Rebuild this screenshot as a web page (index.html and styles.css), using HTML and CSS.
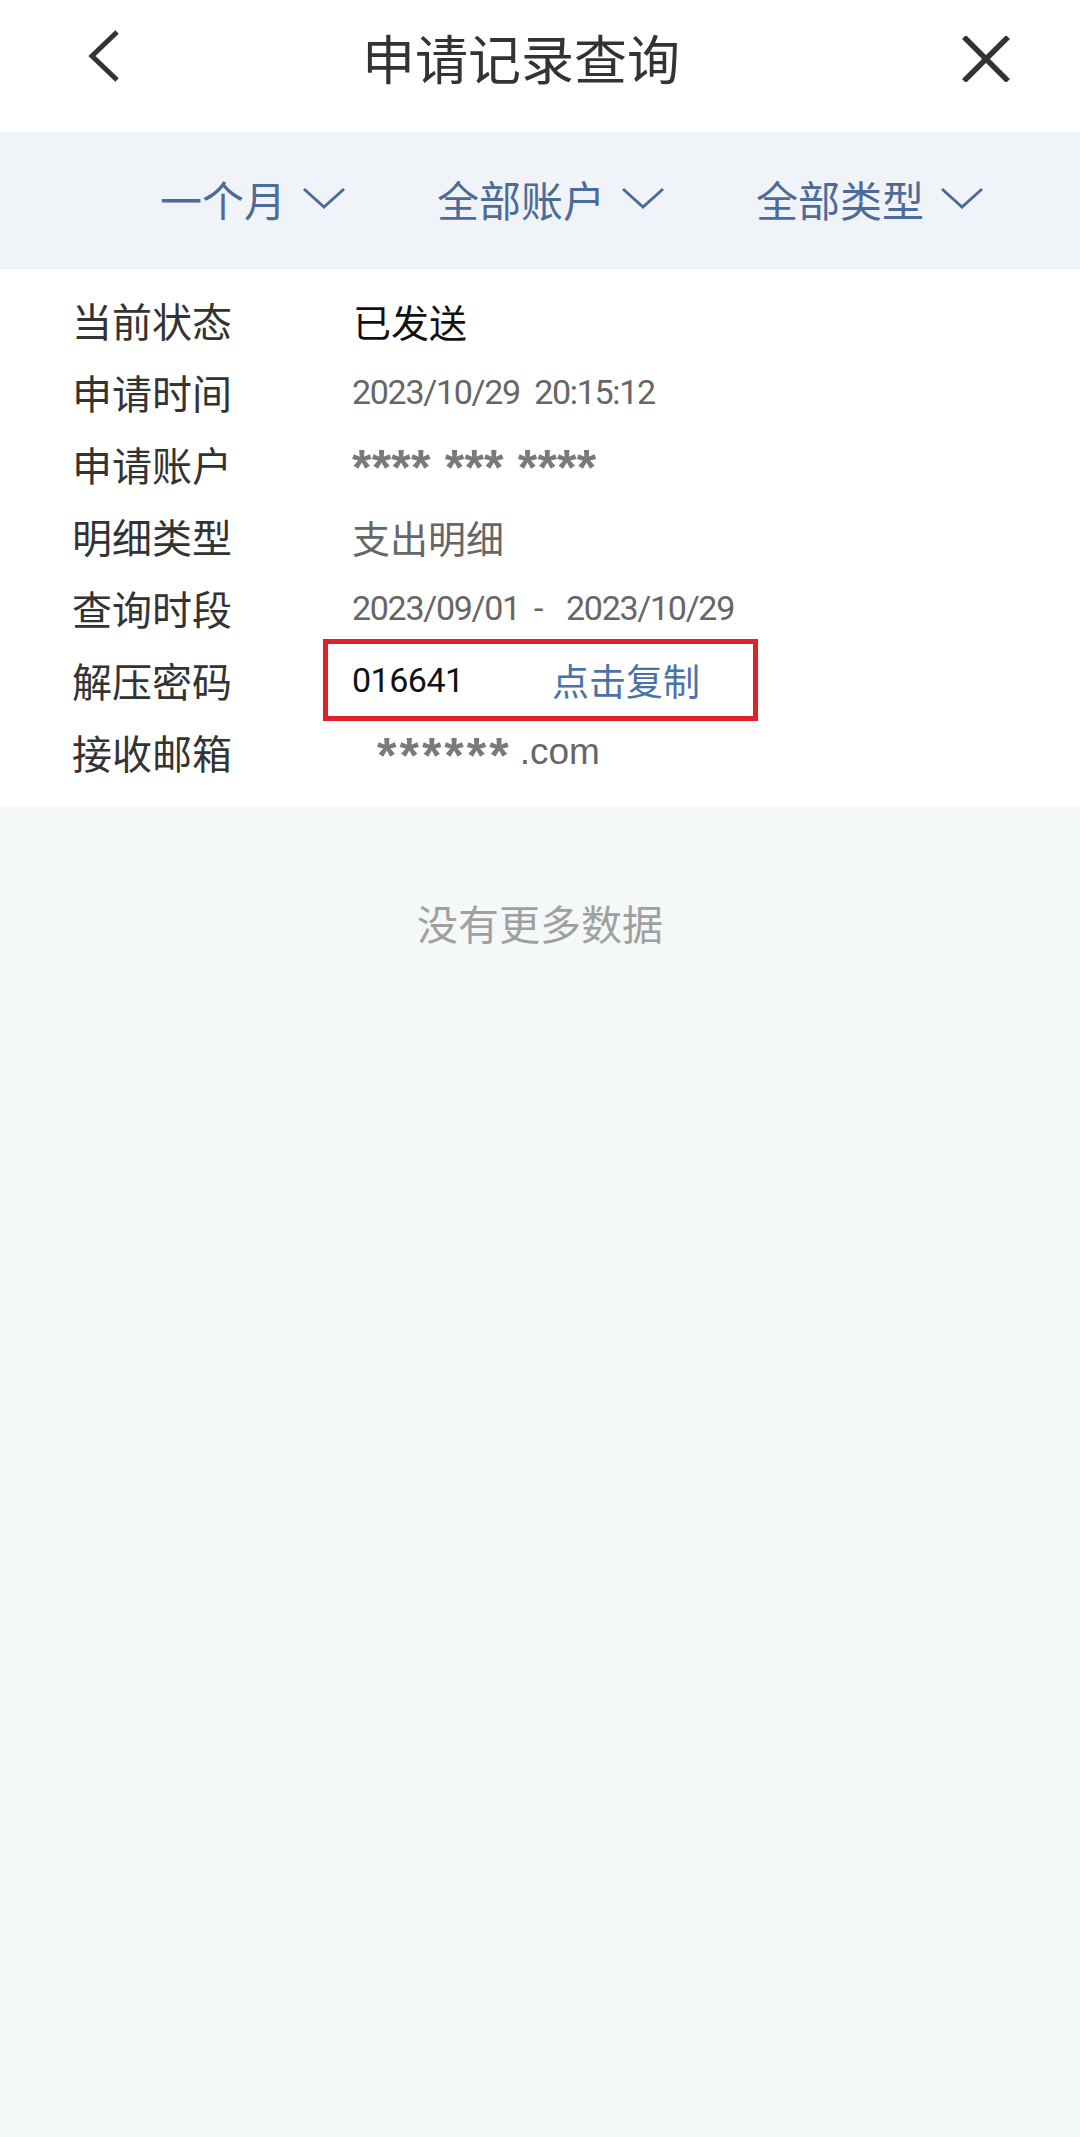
FILE: index.html
```html
<!DOCTYPE html>
<html lang="zh-CN">
<head>
<meta charset="utf-8">
<title>申请记录查询</title>
<link rel="stylesheet" href="styles.css">
</head>
<body>
<header class="topbar">
  <div class="nav-btn back">
    <svg width="40" height="60" viewBox="0 0 40 60"><path d="M33 6 L8 30 L33 54" fill="none" stroke="#333" stroke-width="5" stroke-linecap="butt"/></svg>
  </div>
  <h1 class="title">申请记录查询</h1>
  <div class="nav-btn close">
    <svg width="50" height="46" viewBox="0 0 50 46"><path d="M3 1 L47 45 M47 1 L3 45" fill="none" stroke="#333" stroke-width="5.5"/></svg>
  </div>
</header>

<nav class="filters">
  <div class="filter"><span>一个月</span><svg class="chev" width="44" height="24" viewBox="0 0 44 24"><path d="M2 3 L22 21 L42 3" fill="none" stroke="#4d6b98" stroke-width="3"/></svg></div>
  <div class="filter"><span>全部账户</span><svg class="chev" width="44" height="24" viewBox="0 0 44 24"><path d="M2 3 L22 21 L42 3" fill="none" stroke="#4d6b98" stroke-width="3"/></svg></div>
  <div class="filter"><span>全部类型</span><svg class="chev" width="44" height="24" viewBox="0 0 44 24"><path d="M2 3 L22 21 L42 3" fill="none" stroke="#4d6b98" stroke-width="3"/></svg></div>
</nav>

<section class="record">
  <div class="row"><span class="label">当前状态</span><span class="value strong">已发送</span></div>
  <div class="row"><span class="label">申请时间</span><span class="value num">2023/10/29&nbsp;&nbsp;20:15:12</span></div>
  <div class="row"><span class="label">申请账户</span><span class="value"><span class="stars acct">**** *** ****</span></span></div>
  <div class="row"><span class="label">明细类型</span><span class="value">支出明细</span></div>
  <div class="row"><span class="label">查询时段</span><span class="value num">2023/09/01<span class="dash">-</span>2023/10/29</span></div>
  <div class="row"><span class="label">解压密码</span><span class="value pwd"><span class="code">016641</span><span class="copy">点击复制</span></span></div>
  <div class="row"><span class="label">接收邮箱</span><span class="value mail"><span class="stars email">******</span><span class="dom">.com</span></span></div>
</section>

<p class="nomore">没有更多数据</p>
</body>
</html>
```

FILE: styles.css
```css
html, body {
  margin: 0;
  padding: 0;
}
body {
  width: 1080px;
  min-height: 2137px;
  background: #f5f8f9;
  font-family: "Noto Sans CJK SC", "Noto Sans", sans-serif;
  color: #333;
}
.topbar {
  height: 132px;
  box-sizing: border-box;
  padding-bottom: 16px;
  background: #fff;
  display: grid;
  grid-template-columns: 180px 1fr 180px;
  align-items: center;
}
.nav-btn {
  display: flex;
  align-items: center;
}
.back {
  padding-left: 84px;
  padding-bottom: 4px;
}
.close {
  justify-content: flex-end;
  padding-right: 69px;
  padding-top: 2px;
}
.nav-btn svg { display: block; }
.title {
  margin: 0;
  text-align: center;
  font-size: 53px;
  font-weight: 400;
  color: #333;
  padding-right: 38px;
  line-height: 1.2;
}
.filters {
  height: 137px;
  background: #f0f4f9;
  display: flex;
  align-items: center;
  padding-left: 160px;
  gap: 91px;
  color: #4d6b98;
  font-size: 42px;
}
.filter {
  display: flex;
  align-items: center;
  gap: 16px;
}
.filter span { line-height: 1; margin-top: -3px; }
.chev { display: block; margin-top: -6px; }
.record {
  background: #fff;
  padding: 15px 0 18px;
}
.row {
  height: 72px;
  display: flex;
  align-items: center;
  padding-left: 72px;
}
.label {
  width: 280px;
  flex: none;
  font-size: 40px;
  color: #333;
}
.value {
  font-size: 38px;
  color: #666;
}
.value.strong {
  color: #111;
  font-size: 38px;
  padding-left: 1px;
}
.num {
  font-family: "Roboto", "Liberation Sans", sans-serif;
  font-size: 34px;
  letter-spacing: -1.3px;
  color: #666;
}
.dash {
  margin: 0 24px 0 14px;
}
.stars {
  font-family: "Liberation Sans", sans-serif;
  font-weight: 700;
  color: #7a7a7a;
  white-space: pre;
}
.acct {
  font-size: 50px;
  letter-spacing: 0.2px;
  vertical-align: -10px;
}
.pwd {
  position: relative;
  display: flex;
  align-items: center;
}
.pwd::after {
  content: "";
  position: absolute;
  left: -29px;
  top: 50%;
  width: 435px;
  height: 82px;
  transform: translateY(-50%);
  box-sizing: border-box;
  border: 5px solid #e0212b;
}
.code {
  font-family: "Roboto", "Liberation Sans", sans-serif;
  font-size: 34px;
  color: #111;
  letter-spacing: -0.5px;
  width: 200px;
}
.copy {
  color: #4a72a8;
  font-size: 37px;
}
.mail {
  padding-left: 25px;
  display: flex;
  align-items: center;
}
.email {
  font-size: 50px;
  letter-spacing: 3px;
  margin-top: 8px;
}
.dom {
  font-family: "Liberation Sans", sans-serif;
  font-size: 37px;
  color: #666;
  margin-left: 8px;
}
.nomore {
  margin: 88px 0 0;
  text-align: center;
  font-size: 41px;
  color: #a0a0a0;
  line-height: 56px;
}
```
